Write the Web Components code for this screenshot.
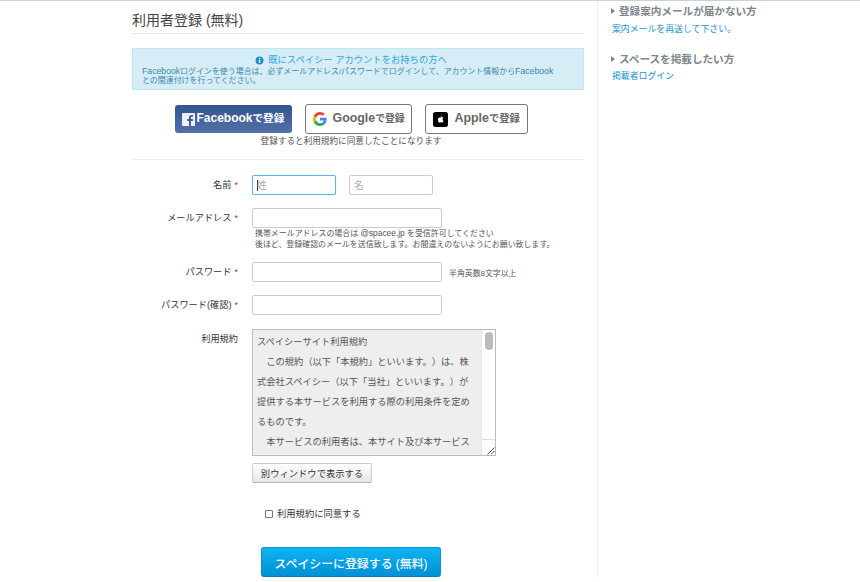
<!DOCTYPE html>
<html lang="ja"><head><meta charset="utf-8"><title>利用者登録</title>
<style>
html,body{margin:0;padding:0;background:#fff}
body{font-family:"Liberation Sans","Noto Sans CJK JP",sans-serif;color:#333;overflow:hidden;text-spacing-trim:space-all}
</style></head><body>
<signup-page>
  <signup-form slot="main"></signup-form>
  <side-block slot="side" heading="登録案内メールが届かない方" link="案内メールを再送して下さい。"></side-block>
  <side-block slot="side" heading="スペースを掲載したい方" link="掲載者ログイン"></side-block>
</signup-page>
<script>
const FONT='"Liberation Sans","Noto Sans CJK JP",sans-serif';
function def(name,css,html){
  customElements.define(name,class extends HTMLElement{
    connectedCallback(){
      if(this.shadowRoot)return;
      const r=this.attachShadow({mode:'open'});
      const get=k=>this.getAttribute(k)||'';
      r.innerHTML='<style>'+css+'</style>'+(typeof html==='function'?html(get,this):html);
    }
  });
}
def('signup-page',`
:host{display:block;border-top:1px solid #d0d0d0;font-family:${FONT}}
.wrap{display:flex;height:576px;padding-left:132px;box-sizing:border-box}
.main{width:452px;flex:none}
.side{margin-left:13px;border-left:1px solid #eee;padding:3px 0 0 14px;flex:1;display:flex;flex-direction:column;gap:16px}
`,`<div class="wrap"><div class="main"><slot name="main"></slot></div><div class="side"><slot name="side"></slot></div></div>`);

def('side-block',`
:host{display:block}
h3{margin:0 0 3.5px -1px;font-size:10.6px;line-height:14px;font-weight:bold;color:#7d868c;display:flex;align-items:center}
h3 i{width:0;height:0;border:3.5px solid transparent;border-left:4px solid #7d868c;border-right:0;margin-right:4px}
a{display:block;font-size:8.9px;line-height:14px;color:#1a94cf;text-decoration:none}
`,g=>`<h3><i></i>${g('heading')}</h3><a>${g('link')}</a>`);

def('info-alert',`
:host{display:block;box-sizing:border-box;height:42px;background:#d6edf6;border:1px solid #bce8f1;padding:6px 23px 0 9px;color:#3a87ad}
.t{display:flex;justify-content:center;align-items:center;gap:4px;font-size:9.3px;line-height:11px;color:#2ea6d9;margin-bottom:1px}
p{margin:0;font-size:7.95px;line-height:9px}
p span{font-size:8.7px}
svg{display:block}
`,`<div class="t"><svg width="9" height="9" viewBox="0 0 9 9"><circle cx="4.5" cy="4.5" r="4" fill="#1f8fcb"/><rect x="3.9" y="3.7" width="1.3" height="3.3" fill="#fff"/><rect x="3.9" y="1.9" width="1.3" height="1.2" fill="#fff"/></svg><span>既にスペイシー アカウントをお持ちの方へ</span></div>
<p><span>Facebook</span>ログインを使う場合は、必ずメールアドレス/パスワードでログインして、アカウント情報から<span>Facebook</span>との関連付けを行ってください。</p>`);

def('social-button',`
:host{display:inline-flex;align-items:center;box-sizing:border-box;font-weight:bold;white-space:nowrap;border-radius:3px;font-size:10.3px}
:host([kind=facebook]){width:117px;height:28px;margin-top:1px;background:linear-gradient(#34548f,#5371a8);color:#fff;padding-left:7px;gap:2px;font-size:10.6px}
:host([kind=google]){width:107px;height:30px;background:#fff;border:1px solid #777;color:#666;padding-left:7px;gap:6px;font-size:9.8px}
:host([kind=apple]){width:103px;height:30px;background:#fff;border:1px solid #777;color:#666;padding-left:7px;gap:7px}
svg{display:block;flex:none}
.txt{padding-bottom:3px}
.lat{font-size:12.4px}
:host([kind=facebook]) .lat{font-size:12px}
`,(g)=>{
 const k=g('kind');
 const ic={facebook:`<svg width="13" height="13" viewBox="0 0 13 13"><rect width="13" height="13" rx="1" fill="#eef1f7"/><path d="M9 13V8h1.8l.3-2H9V4.8c0-.6.2-1 1-1h1.1V2c-.3 0-.9-.1-1.6-.1C8 1.900 7 2.800 7 4.500V6H5.200v2H7v5z" fill="#3f5f99"/></svg>`,
 google:`<svg width="14" height="14" viewBox="0 0 48 48"><path fill="#EA4335" d="M24 9.500c3.500 0 6.700 1.200 9.200 3.600l6.900-6.900C35.900 2.400 30.500 0 24 0 14.600 0 6.500 5.400 2.600 13.200l8 6.200C12.500 13.600 17.800 9.500 24 9.500z"/><path fill="#4285F4" d="M46.500 24.500c0-1.600-.1-3.100-.4-4.500H24v9h12.700c-.6 2.900-2.200 5.400-4.700 7.100l7.700 6c4.500-4.200 6.800-10.300 6.800-17.600z"/><path fill="#FBBC05" d="M10.600 28.600c-.5-1.400-.8-3-.8-4.600s.3-3.200.8-4.600l-8-6.200C.9 16.500 0 20.100 0 24s.9 7.500 2.600 10.800z"/><path fill="#34A853" d="M24 48c6.500 0 11.900-2.100 15.900-5.900l-7.700-6c-2.200 1.400-4.900 2.300-8.200 2.300-6.200 0-11.500-4.100-13.400-9.800l-8 6.200C6.500 42.600 14.600 48 24 48z"/></svg>`,
 apple:`<svg width="15" height="15" viewBox="0 0 15 15"><rect width="15" height="15" rx="2.500" fill="#000"/><path d="M7.600 5.500c.5 0 1-.4 1.500-.4.500 0 1 .3 1.300.7-.5.3-.8.8-.8 1.400 0 .7.400 1.200.9 1.500-.3.800-.9 1.900-1.600 1.900-.4 0-.7-.3-1.200-.3s-.8.3-1.200.3C5.700 10.600 4.900 9 4.900 7.700c0-1.300.8-2.200 1.700-2.200.4 0 .7.200 1 .200z" fill="#fff"/><path d="M7.600 5c0-.8.500-1.400 1.200-1.500 0 .8-.5 1.400-1.200 1.500z" fill="#fff"/></svg>`}[k];
 return ic+`<span class="txt"><span class="lat">${g('latin')}</span><slot></slot></span>`;
});

def('form-row',`
:host{display:grid;grid-template-columns:106px 1fr;column-gap:14px;align-items:start}
.l{text-align:right;font-size:9.2px;line-height:20px;color:#333;white-space:nowrap}
.l b{color:#c0272d;font-weight:normal;font-size:9px;margin-left:3px}
`,g=>`<div class="l">${g('label')}${g('req')?'<b>*</b>':''}</div><div class="c"><slot></slot></div>`);

def('text-box',`
:host{display:inline-flex;align-items:center;box-sizing:border-box;height:20px;width:190px;background:#fff;border:1px solid #ccc;border-radius:2px;padding-left:4px;font-size:9.8px;color:#aaa;vertical-align:top}
:host([focus]){border-color:#5bb4e5;box-shadow:0 0 1px #8fd0f2}
i{display:inline-block;width:1px;height:11px;background:#333;margin-right:-1px}
`,(g,el)=>`${el.hasAttribute('focus')?'<i></i>':''}<slot></slot>`);

def('terms-box',`
:host{display:flex;box-sizing:border-box;width:244px;height:127px;background:#eee;border:1px solid #bbb;font-size:9.26px;line-height:20px;color:#555;overflow:hidden}
.txt{width:228px;flex:none;padding:2px 0 0 4px;box-sizing:border-box;height:125px;overflow:hidden}
.txt div{white-space:nowrap}
.bar{flex:1;background:#fff;border-left:1px solid #e6e6e6;display:flex;flex-direction:column;justify-content:space-between}
.th{width:8px;height:18px;background:#bbb;border-radius:4px;margin:2px 0 0 3px}
.grip{height:15px;border-top:1px solid #ddd;background:#fff;display:flex;justify-content:flex-end;align-items:flex-end}
svg{display:block}
`,`<div class="txt"><div>スペイシーサイト利用規約</div><div>　この規約（以下「本規約」といいます。）は、株</div><div>式会社スペイシー（以下「当社」といいます。）が</div><div>提供する本サービスを利用する際の利用条件を定め</div><div>るものです。</div><div>　本サービスの利用者は、本サイト及び本サービス</div></div>
<div class="bar"><div class="th"></div><div class="grip"><svg width="9" height="9" viewBox="0 0 9 9"><path d="M8.500 1.500 1.500 8.500M8.500 5 5 8.500" stroke="#555" stroke-width="1" fill="none"/></svg></div></div>`);

def('plain-button',`
:host{display:inline-flex;align-items:center;justify-content:center;box-sizing:border-box;width:120px;height:20px;background:linear-gradient(#fff,#e6e6e6);border:1px solid #ccc;border-bottom-color:#b3b3b3;border-radius:2px;font-size:9.3px;color:#333}
`,`<slot></slot>`);

def('submit-button',`
:host{display:flex;align-items:center;justify-content:center;box-sizing:border-box;width:180px;height:30px;background:linear-gradient(#0db4f2,#0090d6);border:1px solid #0a93cf;border-bottom-color:#0a7fb5;border-radius:3px;color:#fff;font-size:11.9px;font-weight:500;white-space:nowrap}
`,`<slot></slot>`);

def('signup-form',`
:host{display:block}
h1{margin:0;font-size:14px;line-height:18px;font-weight:normal;color:#444;padding:10px 0 4px;border-bottom:1px solid #e5e5e5}
info-alert{margin-top:14px}
.social{display:flex;justify-content:center;gap:13px;margin-top:14px;padding-right:14px;align-items:flex-start}
.note{text-align:center;font-size:8.62px;line-height:12px;color:#555;margin-top:1px;padding:0 14px 12px 0;border-bottom:1px solid #eee}
.r1{margin-top:15px;height:33px}
.two{display:flex;gap:13px}
.two text-box{width:84px}
.hint{font-size:7.95px;line-height:11px;color:#555;padding:0 0 0 3px;white-space:nowrap}
.hint span{font-size:8.4px}
.inline{display:flex;align-items:center;gap:7px}
.inline span{font-size:7.9px;color:#555;white-space:nowrap}
.r2{height:54px}.r3{height:33px}.r4{height:34px}
.tb{margin-top:7px}
.agree{display:flex;align-items:center;margin:24px 0 0 133px;font-size:9.3px;line-height:14px;color:#333}
.agree i{box-sizing:border-box;width:8px;height:8px;border:1px solid #777;border-radius:1px;margin-right:4px;background:#fff}
.go{margin:26px 0 0 129px}
`,`<h1>利用者登録 (無料)</h1>
<info-alert></info-alert>
<div class="social"><social-button kind="facebook" latin="Facebook">で登録</social-button><social-button kind="google" latin="Google">で登録</social-button><social-button kind="apple" latin="Apple">で登録</social-button></div>
<div class="note">登録すると利用規約に同意したことになります</div>
<form-row class="r1" label="名前" req="1"><div class="two"><text-box focus>姓</text-box><text-box>名</text-box></div></form-row>
<form-row class="r2" label="メールアドレス" req="1"><text-box></text-box><div class="hint">携帯メールアドレスの場合は <span>@spacee.jp</span> を受信許可してください<br>後ほど、登録確認のメールを送信致します。お間違えのないようにお願い致します。</div></form-row>
<form-row class="r3" label="パスワード" req="1"><div class="inline"><text-box></text-box><span>半角英数8文字以上</span></div></form-row>
<form-row class="r4" label="パスワード(確認)" req="1"><text-box></text-box></form-row>
<form-row label="利用規約"><terms-box></terms-box><plain-button class="tb">別ウィンドウで表示する</plain-button></form-row>
<div class="agree"><i></i>利用規約に同意する</div>
<submit-button class="go">スペイシーに登録する (無料)</submit-button>`);
</script>
</body></html>
